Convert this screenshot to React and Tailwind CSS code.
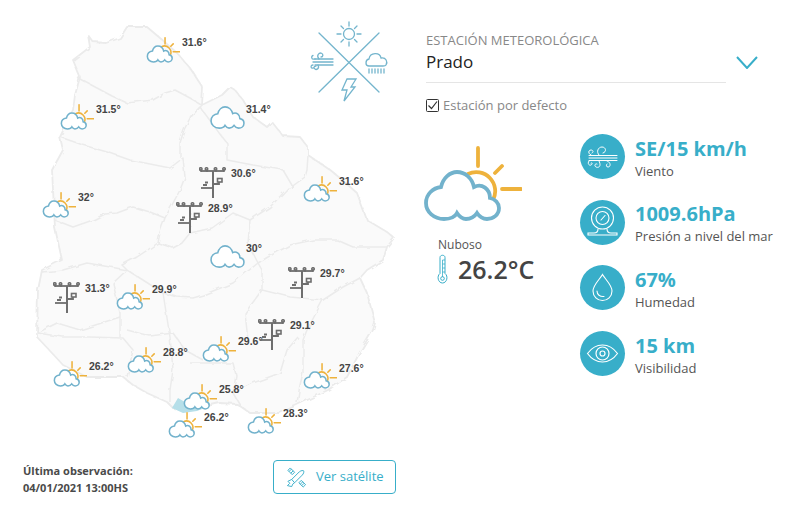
const CLOUD = 'M22 73C12 73 4 66 4 57C4 48 11 42 19 41C21 32 28 26 35 26C43 26 50 32 52 41C60 37 68 43 68 52C73 53 77 57 77 62C77 69 71 73 65 73C60 73 57 70 55 67C53 70 49 73 44 73C40 73 37 70 35 67C33 71 28 73 22 73Z';

const sunMarkers = [
  { x: 165, y: 38, t: '31.6°' },
  { x: 79, y: 105, t: '31.5°' },
  { x: 61, y: 193, t: '32°' },
  { x: 135, y: 285, t: '29.9°' },
  { x: 322, y: 177, t: '31.6°' },
  { x: 72, y: 362, t: '26.2°' },
  { x: 146, y: 348, t: '28.8°' },
  { x: 221, y: 337, t: '29.6°' },
  { x: 202, y: 385, t: '25.8°' },
  { x: 187, y: 413, t: '26.2°' },
  { x: 266, y: 409, t: '28.3°' },
  { x: 322, y: 364, t: '27.6°' },
];

const cloudMarkers = [
  { x: 211, y: 107, t: '31.4°' },
  { x: 211, y: 246, t: '30°' },
];

const towerMarkers = [
  { x: 53, y: 282, t: '31.3°' },
  { x: 199, y: 167, t: '30.6°' },
  { x: 176, y: 202, t: '28.9°' },
  { x: 288, y: 267, t: '29.7°' },
  { x: 258, y: 319, t: '29.1°' },
];

const borders = [
  'M78 78L97 88L112 96L127 103L153 100L165 93L175 90L190 98L202 105',
  'M60 137L83 145L107 152L130 160L150 164L170 168L183 158L185 177L180 190L172 205L165 218L160 232L158 243',
  'M202 105L190 118L184 130L180 143L180 157',
  'M55 220L73 227L93 220L105 214L117 213L133 207L150 212L165 218',
  'M158 243L173 248L182 243L190 233L190 205',
  'M158 243L137 257L122 265L127 270L110 267L87 263L63 270L42 272',
  'M127 270L113 283L120 313L120 337',
  'M127 270L143 280L163 293L177 297L193 298L203 295L233 283L258 263',
  'M163 293L170 337L173 370L170 390L170 402',
  'M37 333L57 323L80 330L120 317',
  'M38 333L63 337L90 337L123 338L133 350L127 377',
  'M127 330L150 336L173 333L185 350L203 360',
  'M250 220L248 243L258 263L268 257L290 245L313 240L337 240L353 247L387 247',
  'M258 263L262 270L262 290L290 297L323 300L343 287L360 278',
  'M262 290L245 313L248 340',
  'M190 233L212 228L233 213L250 220L270 207L288 188L293 187L283 170L253 165L227 160L227 143L217 130L200 107',
  'M190 117L200 107',
  'M308 155L307 170L305 177L290 188',
  'M298 337L287 350L280 373L253 383L233 393L240 405',
  'M323 300L307 330L303 340L303 373L300 385L297 403',
  'M190 363L233 363L236 375L233 393',
];

const stats = [
  { icon: WindIcon, value: 'SE/15 km/h', label: 'Viento' },
  { icon: GaugeIcon, value: '1009.6hPa', label: 'Presión a nivel del mar' },
  { icon: DropIcon, value: '67%', label: 'Humedad' },
  { icon: EyeIcon, value: '15 km', label: 'Visibilidad' },
];

function SunCloud({ className, strokeWidth = 4.5 }) {
  return (
    <svg viewBox="0 0 100 76" className={className} fill="none" strokeLinecap="round">
      <g stroke="#eeb23c" strokeWidth={strokeWidth}>
        <path d="M56 2V20M73 27L80 20M80 43H99M46 28A19 19 0 0 1 71 54" />
      </g>
      <path d={CLOUD} fill="#fff" stroke="#72b2cc" strokeWidth={strokeWidth} />
    </svg>
  );
}

function Tower({ className }) {
  return (
    <svg viewBox="0 0 27 31" className={className} fill="none" stroke="#6e6e6e" strokeWidth="1.5">
      <path d="M2 4H25" strokeWidth="1.800" />
      <path d="M14 4V31" strokeWidth="2" />
      <path d="M2 2V5M8 2V5M17 2V5M25 2V5" />
      <circle cx="1.800" cy="2" r="1.300" />
      <circle cx="7.500" cy="2" r="1.300" />
      <circle cx="16.500" cy="2" r="1.300" />
      <circle cx="25" cy="2" r="1.300" />
      <rect x="18.500" y="11.500" width="4.500" height="3.500" strokeWidth="1.600" />
      <path d="M14 17H20V15" strokeWidth="1.800" />
      <path d="M2 21H14" strokeWidth="1.800" />
      <path d="M6 15.500H9M4 18H8" strokeWidth="1.800" />
    </svg>
  );
}

function WeatherEmblem({ className }) {
  return (
    <svg viewBox="305 18 90 90" className={className} fill="none" stroke="#74b5cd" strokeWidth="1.300" strokeLinecap="round">
      <path d="M319 33L379 92M379 33L319 92" />
      <circle cx="349" cy="34" r="5.500" />
      <path d="M349 22V26M349 42V46M337 34H341M357 34H361M341 26L343.500 28.500M357 26L354.500 28.500M341 42L343.500 39.500M357 42L354.500 39.500" />
      <path d="M315 59H333M313 62H333M315 65H333" />
      <path d="M319 59C316 55 319 53 321 53C324 54 323 57 321 57M315 59C311 60 311 56 313 55.500M318 65C320 69 316 70 315 69C313 68 314 66 316 66M313 65C310 65 311 69 313 68" />
      <path d="M369 66C365 66 365 60 369 59C370 52 380 52 381 58C386 57 388 62 386 65C385.500 66 384 66 383 66Z" />
      <path d="M369 69V73M372 69V73M375 69V73M378 69V73M381 69V73M384 69V73" />
      <path d="M347 79H356L351 87H355L344 101L347 90H342Z" />
    </svg>
  );
}

function WindIcon() {
  return (
    <svg viewBox="0 0 45 45" className="w-[45px] h-[45px]" fill="none" stroke="#fff" strokeWidth="1" strokeLinecap="round">
      <path d="M9 21.500H37M9 24H37M9 26.500H37" />
      <path d="M19 21C16 18 18 13 22 13C26 13 27 18 23 19" />
      <path d="M11 21C8 20 8 16 11 16C13 16 14 18 12 19" />
      <path d="M19 27C22 33 18 34 16 33C14 32 15 29 17 30" />
      <path d="M9 27C7 29 9 32 11 31C13 30 12 28 11 29" />
      <path d="M27 27C31 28 31 33 28 33C26 33 26 31 27 30" />
    </svg>
  );
}

function GaugeIcon() {
  return (
    <svg viewBox="0 0 45 45" className="w-[45px] h-[45px]" fill="none" stroke="#fff" strokeWidth="1.100" strokeLinecap="round">
      <circle cx="22.500" cy="18" r="11" />
      <circle cx="22.500" cy="18" r="6.500" />
      <path d="M21 20L25 15.500" />
      <path d="M18 29C18 31 17 33 14 33H8V35H37V33H31C28 33 27 31 27 29" />
    </svg>
  );
}

function DropIcon() {
  return (
    <svg viewBox="0 0 45 45" className="w-[45px] h-[45px]" fill="none" stroke="#fff" strokeWidth="1.100" strokeLinecap="round">
      <path d="M22.500 9.500C20 14 13 20 13 26C13 31.500 17.500 35.500 22.500 35.500C27.500 35.500 32 31.500 32 26C32 20 25 14 22.500 9.500Z" />
      <path d="M17 26C17 29.500 20 32 24 31.500" />
    </svg>
  );
}

function EyeIcon() {
  return (
    <svg viewBox="0 0 45 45" className="w-[45px] h-[45px]" fill="none" stroke="#fff" strokeWidth="1.200" strokeLinecap="round">
      <path d="M7.500 22.500C13 15 18 14 22.500 14C27 14 32 15 37.500 22.500C32 30 27 31 22.500 31C18 31 13 30 7.500 22.500Z" />
      <circle cx="22.500" cy="22.500" r="6.500" />
      <circle cx="22.500" cy="22.500" r="2.500" />
    </svg>
  );
}

function Thermometer() {
  return (
    <svg viewBox="0 0 11 30" className="w-[11px] h-[30px]" fill="none" stroke="#38aec9" strokeWidth="1">
      <path d="M3 19.500V3.500C3 0.500 8 0.500 8 3.500V19.500C11.500 22 10 29 5.500 29C1 29 -0.500 22 3 19.500Z" />
      <circle cx="5.500" cy="24.500" r="1.800" />
      <path d="M5.500 23V6M5.500 6H8M5.500 10H8M5.500 14H8M5.500 18H8" strokeWidth="0.800" />
    </svg>
  );
}

function SatelliteIcon() {
  return (
    <svg viewBox="0 0 22 22" className="w-[21px] h-[21px]" fill="none" stroke="#38aec9" strokeWidth="1" strokeLinejoin="round">
      <path d="M2 3.500L4.500 1L9 5.500L6.500 8Z" />
      <path d="M3.200 4.700L5.700 2.200M5 6.500L7.500 4" />
      <path d="M13.500 16.500L16 14L20.500 18.500L18 21Z" />
      <path d="M15 18L17.500 15.500M16.500 19.500L19 17" />
      <path d="M6 13L14 5C16 3.500 18 3.500 18.500 4C19 5 18.500 7 17 8.500L9 16.500Z" />
      <path d="M6 13L2 15L4 17L1.500 19.500L6 20.500L7 18L9 16.500" />
    </svg>
  );
}

export default function App() {
  return (
    <div className="w-[795px] h-[518px] bg-white flex overflow-hidden font-['Open_Sans',sans-serif]">
      <div className="w-[426px] shrink-0">
        <div className="relative h-[455px]">
          {/* Map */}
          <svg viewBox="0 0 410 455" className="block w-[410px] h-[455px]" fill="none">
            <defs>
              <filter id="rough" x="-5%" y="-5%" width="110%" height="110%">
                <feTurbulence type="fractalNoise" baseFrequency="0.12" numOctaves="2" seed="4" />
                <feDisplacementMap in="SourceGraphic" scale="4" />
              </filter>
            </defs>
            <g filter="url(#rough)">
              <path
                d="M88 35L93 42L106 43L120 38L127 27L147 27L160 38L177 53L190 68L203 88L202 105L222 95L230 87L235 90L243 100L253 117L267 127L272 122L283 136L300 137L308 147L308 155L330 170L340 178L357 193L367 220L387 232L394 238L387 247L383 260L367 270L360 278L367 293L375 323L373 330L360 352L347 377L328 390L297 405L280 413L265 413L250 413L237 404L220 403L207 406L183 410L173 408L167 402L147 393L133 385L123 377L87 377L63 365L52 353L37 337L38 290L42 270L62 260L55 228L52 170L63 150L60 137L73 110L75 95L80 77L73 60L90 47Z"
                fill="#fafafa"
                stroke="#ebebeb"
                strokeWidth="1.800"
                strokeLinejoin="round"
              />
              {borders.map((d) => (
                <path key={d} d={d} stroke="#ebebeb" strokeWidth="1.500" strokeLinejoin="round" />
              ))}
            </g>
            <path d="M178 398L172 408L183 413L197 411L207 407L190 405Z" fill="#b6dfe9" />
          </svg>

          <WeatherEmblem className="absolute left-[305px] top-[18px] w-[90px] h-[90px]" />

          {sunMarkers.map((m) => (
            <div key={`${m.x}-${m.y}`} className="absolute w-0 h-0" style={{ left: m.x, top: m.y }}>
              <SunCloud className="absolute left-[-19px] top-[-1px] w-[34px] h-[26px]" />
              <span className="absolute left-[17px] top-[-3px] text-[10.500px] leading-[14px] font-bold text-[#444] font-['Liberation_Sans',sans-serif]">{m.t}</span>
            </div>
          ))}
          {cloudMarkers.map((m) => (
            <div key={`${m.x}-${m.y}`} className="absolute w-0 h-0" style={{ left: m.x, top: m.y }}>
              <svg viewBox="2 24 77 51" className="absolute left-[-1px] top-[-1px] w-[35px] h-[23px]" fill="none">
                <path d={CLOUD} fill="#fff" stroke="#72b2cc" strokeWidth="3.500" />
              </svg>
              <span className="absolute left-[35px] top-[-5px] text-[10.500px] leading-[14px] font-bold text-[#444] font-['Liberation_Sans',sans-serif]">{m.t}</span>
            </div>
          ))}
          {towerMarkers.map((m) => (
            <div key={`${m.x}-${m.y}`} className="absolute w-0 h-0" style={{ left: m.x, top: m.y }}>
              <Tower className="absolute left-0 top-0 w-[27px] h-[31px]" />
              <span className="absolute left-[32px] top-[-1px] text-[10.500px] leading-[14px] font-bold text-[#444] font-['Liberation_Sans',sans-serif]">{m.t}</span>
            </div>
          ))}
        </div>

        <div className="w-[396px] mt-[5px] pl-[23px] flex items-start justify-between">
          <div className="mt-[2px] text-[11px] leading-[17px] font-bold text-[#4a4a4a]">
            <div>Última observación:</div>
            <div>04/01/2021 13:00HS</div>
          </div>
          <button className="w-[123px] h-[34px] border border-[#38aec9] rounded-[4px] flex items-center pl-[12px] gap-[9px] text-[13px] text-[#38aec9]">
            <SatelliteIcon />
            <span>Ver satélite</span>
          </button>
        </div>
      </div>

      <div className="flex-1 pt-[32px]">
        {/* Station selector */}
        <div className="flex items-start">
          <div className="w-[300px] h-[51px] border-b border-[#e5e5e5]">
            <div className="text-[13px] leading-[17px] text-[#888]">ESTACIÓN METEOROLÓGICA</div>
            <div className="text-[17px] leading-[26px] text-[#222]">Prado</div>
          </div>
          <svg viewBox="0 0 22 13" className="ml-[10px] mt-[24px] w-[22px] h-[13px]" fill="none" stroke="#38aec9" strokeWidth="2">
            <path d="M1 1L11 12L21 1" />
          </svg>
        </div>

        <div className="mt-[14px] flex items-center gap-[4px]">
          <svg viewBox="0 0 13 13" className="w-[13px] h-[13px]" fill="none" stroke="#333">
            <rect x="0.500" y="0.500" width="12" height="12" rx="1" />
            <path d="M2.500 6.500L5.500 9.500L11 2.500" strokeWidth="1.200" />
          </svg>
          <span className="text-[13px] leading-[17px] text-[#888]">Estación por defecto</span>
        </div>

        <div className="mt-[20px] flex">
          {/* Current condition */}
          <div className="w-[158px] shrink-0 -ml-[4px] pt-[12px]">
            <SunCloud className="w-[100px] h-[76px]" strokeWidth="3.800" />
            <div className="ml-[16px] mt-[15px] text-[12px] leading-[16px] text-[#555]">Nuboso</div>
            <div className="ml-[15px] mt-[1px] flex items-center gap-[10px]">
              <Thermometer />
              <span className="text-[25px] leading-[30px] font-semibold text-[#444]">26.2°C</span>
            </div>
          </div>

          {/* Readings */}
          <div className="flex flex-col gap-[20.700px]">
            {stats.map((s) => (
              <div key={s.label} className="flex items-center gap-[10px] h-[45px]">
                <div className="w-[45px] h-[45px] rounded-full bg-[#38aec9] shrink-0">
                  <s.icon />
                </div>
                <div>
                  <div className="text-[20px] leading-[28px] font-bold text-[#38aec9]">{s.value}</div>
                  <div className="text-[13px] leading-[16px] text-[#555]">{s.label}</div>
                </div>
              </div>
            ))}
          </div>
        </div>
      </div>
    </div>
  );
}
